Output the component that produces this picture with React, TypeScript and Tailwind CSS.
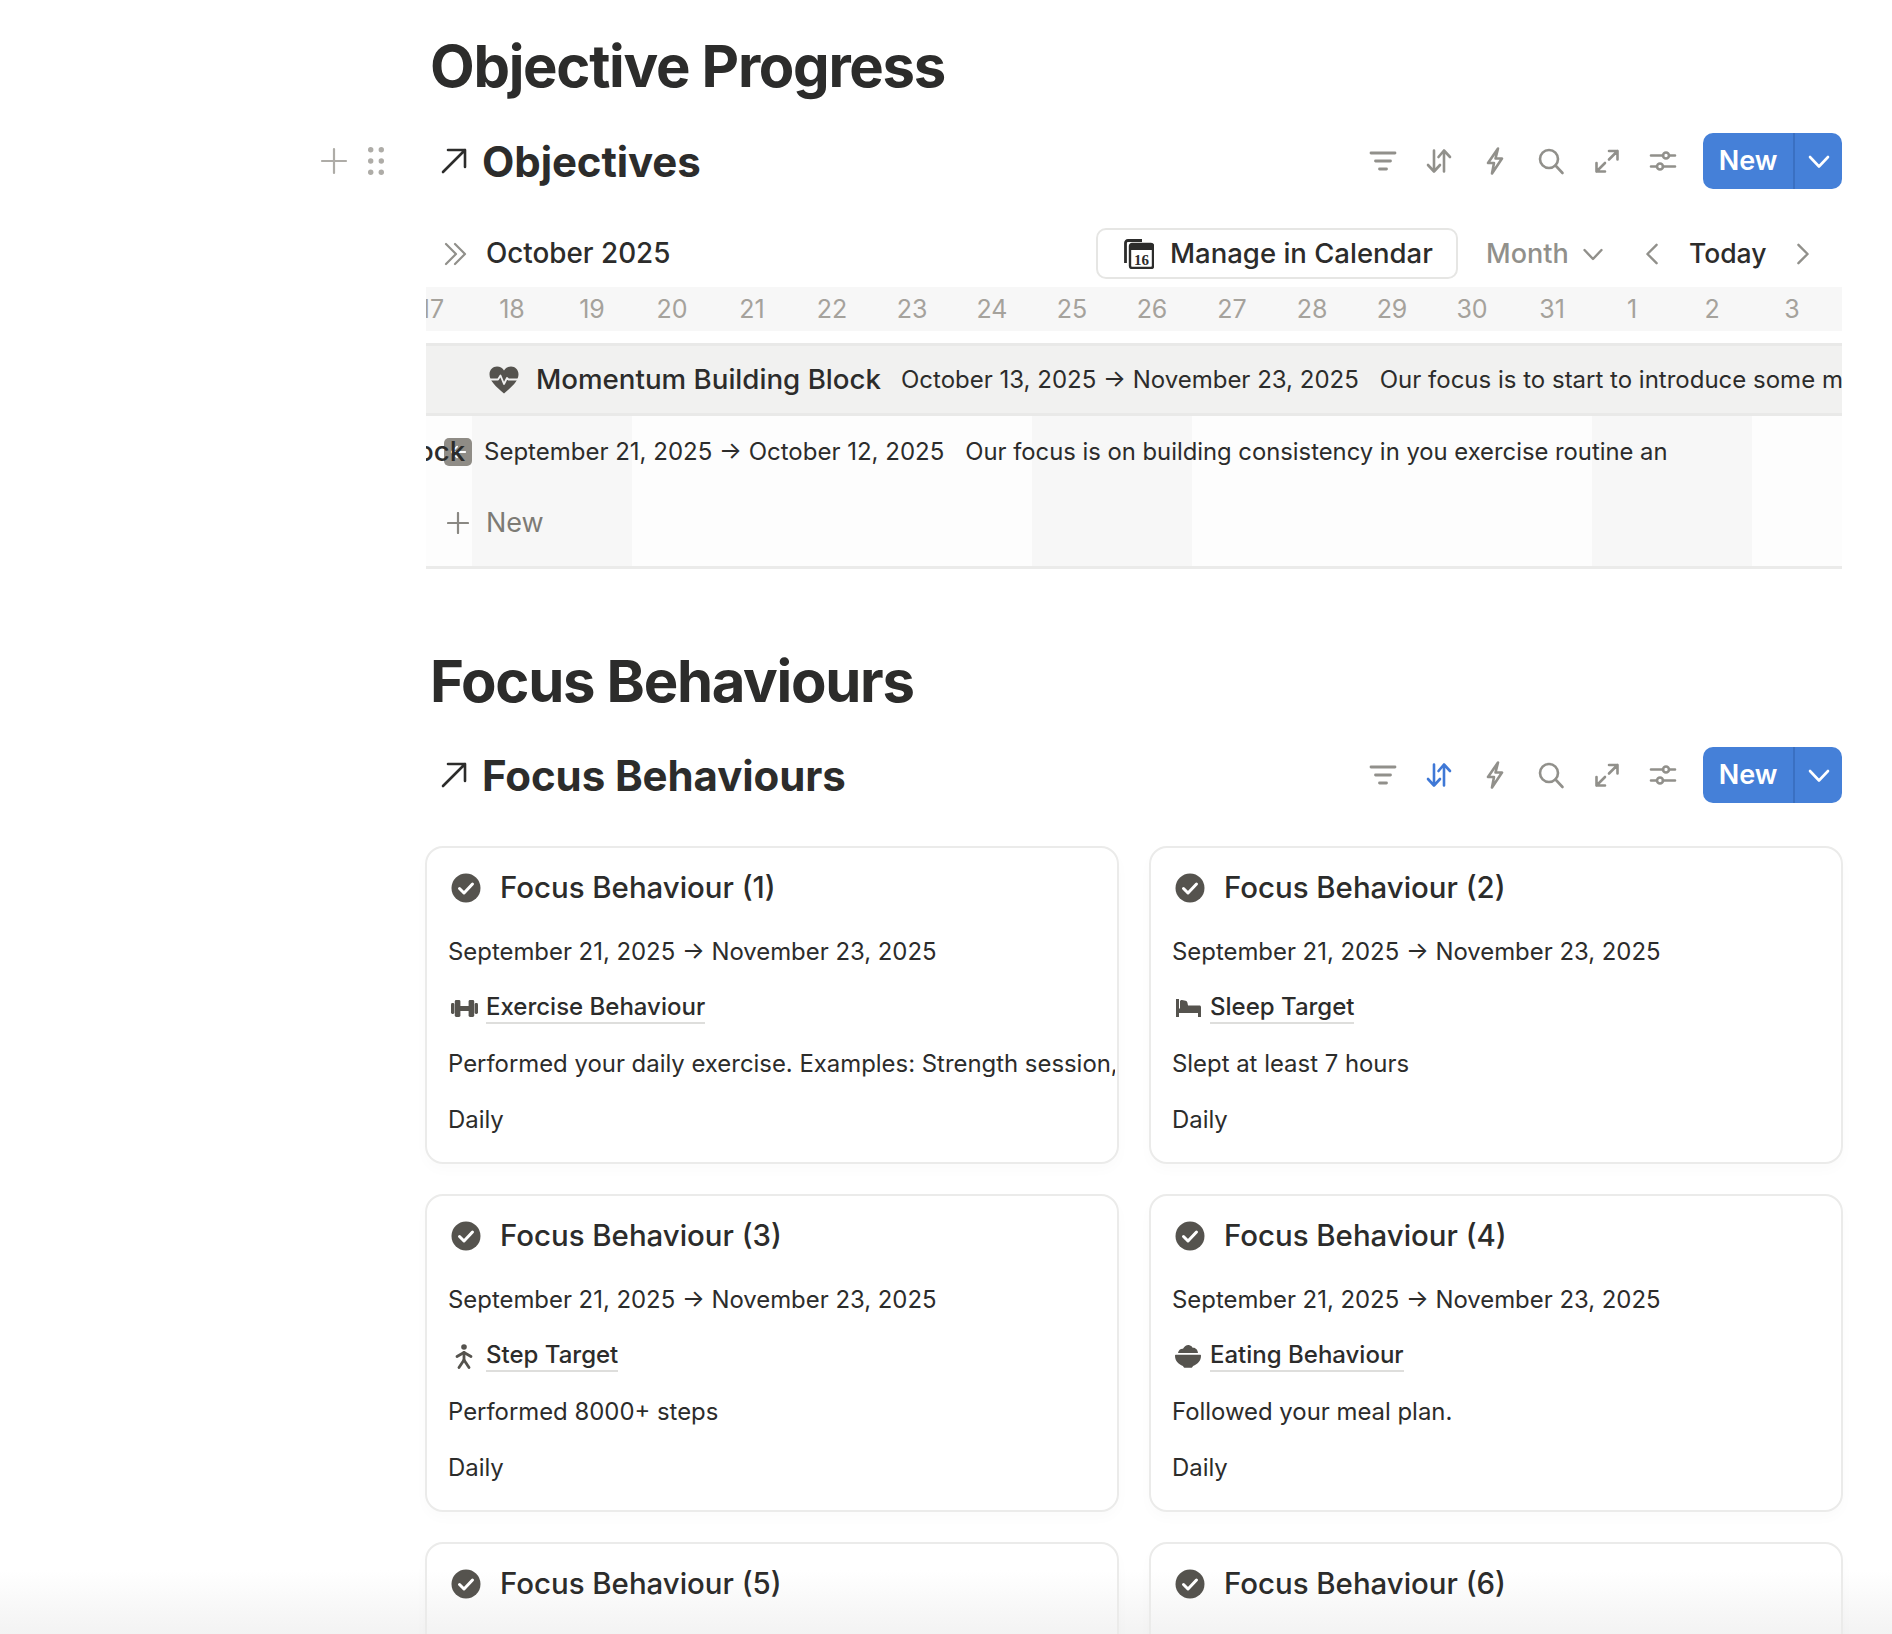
const days = [17, 18, 19, 20, 21, 22, 23, 24, 25, 26, 27, 28, 29, 30, 31, 1, 2, 3];
const weekendDays = [18, 19, 25, 26, 1, 2];

function CheckCircle() {
  return (
    <svg viewBox="0 0 30 30" className="h-[30px] w-[30px] shrink-0">
      <circle cx="15" cy="15" r="14.5" fill="#55534e" />
      <path d="M8.5 15.5l4.5 4.5 8.5-9" fill="none" stroke="#fff" strokeWidth="3" strokeLinecap="round" strokeLinejoin="round" />
    </svg>
  );
}

function Dumbbell() {
  return (
    <svg viewBox="0 0 27 17" className="h-[17px] w-[27px]" fill="#55534e">
      <rect x="0" y="3" width="3.4" height="11" rx="1.4" />
      <rect x="3.8" y="0" width="5.6" height="17" rx="1.4" />
      <rect x="9" y="6" width="9" height="5" />
      <rect x="17.6" y="0" width="5.6" height="17" rx="1.4" />
      <rect x="23.6" y="3" width="3.4" height="11" rx="1.4" />
    </svg>
  );
}

function Bed() {
  return (
    <svg viewBox="0 0 25 18" className="h-[18px] w-[25px]" fill="#55534e">
      <path d="M0 0h3v9.500h22V18h-3v-4H3v4H0z" />
      <path d="M4 2.500c0-1 1-1.700 2-1.500l3.500.7c1.200.3 1.800 1 2 2.200l.5 2.600h11.500c.8 0 1.500.7 1.500 1.500V10H4z" />
    </svg>
  );
}

function Person() {
  return (
    <svg viewBox="0 0 18 25" className="h-[25px] w-[18px]" fill="none" stroke="#55534e" strokeWidth="2.8" strokeLinecap="round" strokeLinejoin="round">
      <circle cx="9" cy="3" r="2.8" fill="#55534e" stroke="none" />
      <path d="M2 12.500L9 8.500l7 4" />
      <path d="M9 8.500v7.500l-5 7.500" />
      <path d="M9 16l5 7.500" />
    </svg>
  );
}

function Bowl() {
  return (
    <svg viewBox="0 0 26 24" className="h-[24px] w-[26px]" fill="#55534e">
      <path d="M3 9c.4-3 3-4.500 5-4.200C9.500 2 12 .6 14.500 1.200c1.600.4 2.700 1.400 3.300 2.700 2.700-.4 5 2.300 5.200 5.100z" />
      <path d="M1 10.800h24c.6 0 1 .4 1 1 0 4.800-3.200 8.600-8 10.200-.4 1.200-1 1.800-2 1.800h-6c-1 0-1.600-.6-2-1.800-4.800-1.600-8-5.400-8-10.200 0-.6.400-1 1-1z" />
    </svg>
  );
}

function HeartPulse() {
  return (
    <svg viewBox="0 0 30 28" className="h-[28px] w-[30px] shrink-0">
      <path d="M15 27.500C7 20.500 .5 15 .5 8.200.5 3.800 3.800.5 8 .5c3 0 5.500 1.600 7 4 1.500-2.400 4-4 7-4 4.200 0 7.500 3.300 7.500 7.700C29.500 15 23 20.500 15 27.500z" fill="#55534e" />
      <path d="M0 13.500h9l2.500-4 3.500 8.500 3-6 1.500 1.500H30" fill="none" stroke="#f1f1f0" strokeWidth="1.800" strokeLinejoin="round" />
    </svg>
  );
}

function ToolIcons({ sortActive }: { sortActive?: boolean }) {
  const sortColor = sortActive ? "#3f78d6" : "#91908b";
  return (
    <div className="flex items-center gap-[28px]">
      <svg viewBox="0 0 28 28" className="h-[28px] w-[28px]" fill="none" stroke="#91908b" strokeWidth="2.8" strokeLinecap="round">
        <path d="M2 6h24M6.500 14h15M10.500 22h7" />
      </svg>
      <svg viewBox="0 0 28 28" className="h-[28px] w-[28px]" fill="none" stroke={sortColor} strokeWidth="2.6" strokeLinecap="round" strokeLinejoin="round">
        <path d="M9 3.500V24M3 18l6 6.500 6-6.500" />
        <path d="M19 24.500V4M13.500 10L19 3.500 25 10" />
      </svg>
      <svg viewBox="0 0 28 28" className="h-[28px] w-[28px]" fill="none" stroke="#91908b" strokeWidth="2.6" strokeLinejoin="round">
        <path d="M17 1.500L7 16h6l-2 10.500L21 11.500h-6.500z" />
      </svg>
      <svg viewBox="0 0 28 28" className="h-[28px] w-[28px]" fill="none" stroke="#91908b" strokeWidth="2.6" strokeLinecap="round">
        <circle cx="12" cy="12" r="9" />
        <path d="M18.500 18.500l7 7.500" />
      </svg>
      <svg viewBox="0 0 28 28" className="h-[28px] w-[28px]" fill="none" stroke="#91908b" strokeWidth="2.6" strokeLinecap="round" strokeLinejoin="round">
        <path d="M16 4h8.500v8.500M24.500 4L16 12.500M12 24.500H3.500V16M3.500 24.500L12 16" />
      </svg>
      <svg viewBox="0 0 28 28" className="h-[28px] w-[28px]" fill="none" stroke="#91908b" strokeWidth="2.6" strokeLinecap="round">
        <path d="M2 8.500h12M20.500 8.500H26M2 19.500h5.500M14 19.500h12" />
        <circle cx="17" cy="8.500" r="3" />
        <circle cx="11" cy="19.500" r="3" />
      </svg>
    </div>
  );
}

function DatabaseHeader({ title, sortActive }: { title: string; sortActive?: boolean }) {
  return (
    <div className="flex h-[56px] items-center justify-between pr-[1px]">
      <div className="flex items-center pl-[16px]">
        <svg viewBox="0 0 26 26" className="h-[26px] w-[26px]" fill="none" stroke="#2c2c2b" strokeWidth="2.6" strokeLinecap="round" strokeLinejoin="round">
          <path d="M2 24L24 2M7 2h17v17" />
        </svg>
        <span className="ml-[15px] mt-[2px] text-[42px] font-bold leading-none tracking-[-0.1px] text-[#2c2c2b]">{title}</span>
      </div>
      <div className="flex items-center gap-[26px]">
        <ToolIcons sortActive={sortActive} />
        <div className="flex h-[56px] w-[139px] overflow-hidden rounded-[10px] bg-[#4580d8] text-white">
          <span className="flex w-[92px] items-center justify-center border-r-2 border-[#3a70c2] text-[27px] font-semibold">New</span>
          <span className="flex flex-1 items-center justify-center">
            <svg viewBox="0 0 22 22" className="h-[22px] w-[22px]" fill="none" stroke="#fff" strokeWidth="2.6" strokeLinecap="round" strokeLinejoin="round">
              <path d="M2 7l9 9.500L20 7" />
            </svg>
          </span>
        </div>
      </div>
    </div>
  );
}

function Calendar() {
  return (
    <div className="ml-[1px] pr-[1px]">
      {/* toolbar */}
      <div className="mt-[39px] flex h-[51px] items-center justify-between pl-[18px] pr-[32px]">
        <div className="flex items-center gap-[18px]">
          <svg viewBox="0 0 24 24" className="h-[24px] w-[24px]" fill="none" stroke="#91908b" strokeWidth="2.2" strokeLinecap="round" strokeLinejoin="round">
            <path d="M2 2l10 10L2 22M11 2l10 10-10 10" />
          </svg>
          <span className="text-[27.8px] font-medium text-[#2c2c2b]">October 2025</span>
        </div>
        <div className="flex items-center">
          <div className="flex h-[51px] w-[362px] items-center rounded-[10px] border-2 border-[#e6e6e4] pl-[26px]">
            <svg viewBox="0 0 30 30" className="h-[30px] w-[30px]">
              <path d="M1.500 24V4c0-1.500 1-2.500 2.500-2.500H18" fill="none" stroke="#2c2c2b" strokeWidth="2.8" />
              <rect x="6" y="5" width="23" height="24" rx="2" fill="#fff" stroke="#2c2c2b" strokeWidth="2.4" />
              <rect x="6" y="5" width="23" height="6" fill="#2c2c2b" />
              <text x="17.5" y="26" fontSize="15" fontWeight="700" textAnchor="middle" fill="#2c2c2b" fontFamily="'Liberation Serif', serif">16</text>
            </svg>
            <span className="ml-[16px] text-[27.5px] font-medium text-[#2c2c2b]">Manage in Calendar</span>
          </div>
          <span className="ml-[28px] w-[82px] pt-[1px] text-[27px] font-medium text-[#91908b]">Month</span>
          <svg viewBox="0 0 20 20" className="ml-[15px] h-[20px] w-[20px]" fill="none" stroke="#91908b" strokeWidth="2.4" strokeLinecap="round" strokeLinejoin="round">
            <path d="M1.500 6l8.500 9 8.500-9" />
          </svg>
          <svg viewBox="0 0 14 24" className="ml-[42px] h-[22px] w-[14px]" fill="none" stroke="#91908b" strokeWidth="2.6" strokeLinecap="round" strokeLinejoin="round">
            <path d="M12 2L2 12l10 10" />
          </svg>
          <span className="ml-[30px] w-[76px] pt-[1px] text-[26.5px] font-medium text-[#2c2c2b]">Today</span>
          <svg viewBox="0 0 14 24" className="ml-[31px] h-[22px] w-[14px]" fill="none" stroke="#91908b" strokeWidth="2.6" strokeLinecap="round" strokeLinejoin="round">
            <path d="M2 2l10 10L2 22" />
          </svg>
        </div>
      </div>

      {/* day header */}
      <div className="mt-[8px] h-[44px] overflow-hidden bg-[#f7f7f7]">
        <div className="ml-[-34px] flex">
          {days.map((d) => (
            <span key={d} className="flex h-[44px] w-[80px] shrink-0 items-center justify-center pt-[2px] text-[25px] text-[#a5a29c]">
              {d}
            </span>
          ))}
        </div>
      </div>

      {/* body */}
      <div className="relative mt-[12px] h-[226px] overflow-hidden border-b-[3px] border-[#ebebea] bg-[#fdfdfd]">
        <div className="absolute inset-0 ml-[-34px] flex">
          {days.map((d) => (
            <div key={d} className={`h-full w-[80px] shrink-0 ${weekendDays.includes(d) ? "bg-[#f7f7f7]" : ""}`} />
          ))}
        </div>

        <div className="relative">
          <div className="flex h-[73px] items-center whitespace-nowrap border-y-[3px] border-[#e9e9e8] bg-[#f1f1f0] pl-[63px]">
            <HeartPulse />
            <span className="ml-[17px] text-[27.7px] font-medium text-[#2c2c2b]">Momentum Building Block</span>
            <span className="ml-[20px] text-[24px] text-[#2c2c2b]">October 13, 2025 → November 23, 2025</span>
            <span className="ml-[21px] text-[24px] text-[#2c2c2b]">Our focus is to start to introduce some m</span>
          </div>

          <div className="relative flex h-[72px] items-center whitespace-nowrap pl-[58px]">
            <span className="absolute left-[18px] flex h-[28px] w-[28px] items-center justify-center rounded-[5px] bg-[#8f8c86]">
              <svg viewBox="0 0 20 20" className="h-[18px] w-[18px]" fill="none" stroke="#fff" strokeWidth="2" strokeLinecap="round" strokeLinejoin="round">
                <path d="M18 10H3M9 4l-6 6 6 6" />
              </svg>
            </span>
            <span className="absolute left-[-9px] text-[27.7px] font-medium text-[#2c2c2b]">ock</span>
            <span className="text-[24px] text-[#2c2c2b]">September 21, 2025 → October 12, 2025</span>
            <span className="ml-[21px] text-[23.8px] text-[#2c2c2b]">Our focus is on building consistency in you exercise routine an</span>
          </div>

          <div className="flex h-[70px] items-center pl-[21px]">
            <svg viewBox="0 0 22 22" className="h-[22px] w-[22px]" fill="none" stroke="#8a8883" strokeWidth="2.2" strokeLinecap="round">
              <path d="M11 1v20M1 11h20" />
            </svg>
            <span className="ml-[17px] text-[27px] text-[#7d7b75]">New</span>
          </div>
        </div>
      </div>
    </div>
  );
}

const cards = [
  { n: 1, icon: <Dumbbell />, rel: "Exercise Behaviour", desc: "Performed your daily exercise. Examples: Strength session, walk, run, swim" },
  { n: 2, icon: <Bed />, rel: "Sleep Target", desc: "Slept at least 7 hours" },
  { n: 3, icon: <Person />, rel: "Step Target", desc: "Performed 8000+ steps" },
  { n: 4, icon: <Bowl />, rel: "Eating Behaviour", desc: "Followed your meal plan." },
  { n: 5, icon: <Dumbbell />, rel: "", desc: "" },
  { n: 6, icon: <Bed />, rel: "", desc: "" },
];

function Card({ n, icon, rel, desc }: (typeof cards)[number]) {
  return (
    <div className="h-[318px] overflow-hidden rounded-[18px] border-2 border-[#ebebea] pl-[21px] pr-[2px] pt-[12px] shadow-[0_6px_14px_rgba(0,0,0,0.02)]">
      <div className="flex h-[56px] items-center">
        <span className="ml-[3px]"><CheckCircle /></span>
        <span className="ml-[19px] text-[29.4px] font-medium text-[#2c2c2b]">Focus Behaviour ({n})</span>
      </div>
      <div className="mt-[8px] flex h-[56px] items-center whitespace-nowrap text-[23.9px] text-[#2c2c2b]">
        September 21, 2025 → November 23, 2025
      </div>
      <div className="flex h-[56px] items-center">
        <span className="flex w-[38px] justify-center pl-[2px] pr-[8px]">{icon}</span>
        <span className="border-b-2 border-[#dededc] text-[24px] font-medium leading-[30px] text-[#2c2c2b]">{rel}</span>
      </div>
      <div className="flex h-[56px] items-center overflow-hidden whitespace-nowrap text-[23.9px] text-[#2c2c2b]">
        {desc}
      </div>
      <div className="flex h-[56px] items-center text-[23.9px] text-[#2c2c2b]">Daily</div>
    </div>
  );
}

export default function App() {
  return (
    <div className="relative h-[1634px] w-[1892px] overflow-hidden bg-white font-['Inter',sans-serif]">
      {/* bottom fade, sits behind the page content */}
      <div className="pointer-events-none absolute inset-x-0 bottom-0 h-[64px] bg-gradient-to-b from-transparent to-[#f3f3f3]" />

      <main className="relative ml-[425px] w-[1418px] pt-[31px]">
        <h1 className="flex h-[70px] items-center pl-[5px] text-[58px] font-bold tracking-[-1.3px] text-[#2c2c2b]">Objective Progress</h1>

        <div className="relative mt-[32px]">
          {/* block handle */}
          <div className="absolute left-[-105px] top-[14px] flex items-center gap-[20px]">
            <svg viewBox="0 0 28 28" className="h-[28px] w-[28px]" fill="none" stroke="#aeaca7" strokeWidth="2.2" strokeLinecap="round">
              <path d="M14 2v24M2 14h24" />
            </svg>
            <svg viewBox="0 0 16 28" className="h-[28px] w-[16px]" fill="#aeaca7">
              <circle cx="2.7" cy="2.7" r="2.7" />
              <circle cx="13.3" cy="2.7" r="2.7" />
              <circle cx="2.7" cy="14" r="2.7" />
              <circle cx="13.3" cy="14" r="2.7" />
              <circle cx="2.7" cy="25.3" r="2.7" />
              <circle cx="13.3" cy="25.3" r="2.7" />
            </svg>
          </div>
          <DatabaseHeader title="Objectives" />
        </div>

        <Calendar />

        <h1 className="mt-[77px] flex h-[70px] items-center pl-[5px] text-[58px] font-bold tracking-[-1.3px] text-[#2c2c2b]">Focus Behaviours</h1>

        <div className="mt-[31px]">
          <DatabaseHeader title="Focus Behaviours" sortActive />
        </div>

        <div className="mt-[43px] grid grid-cols-2 gap-[30px]">
          {cards.map((c) => (
            <Card key={c.n} {...c} />
          ))}
        </div>
      </main>
    </div>
  );
}
